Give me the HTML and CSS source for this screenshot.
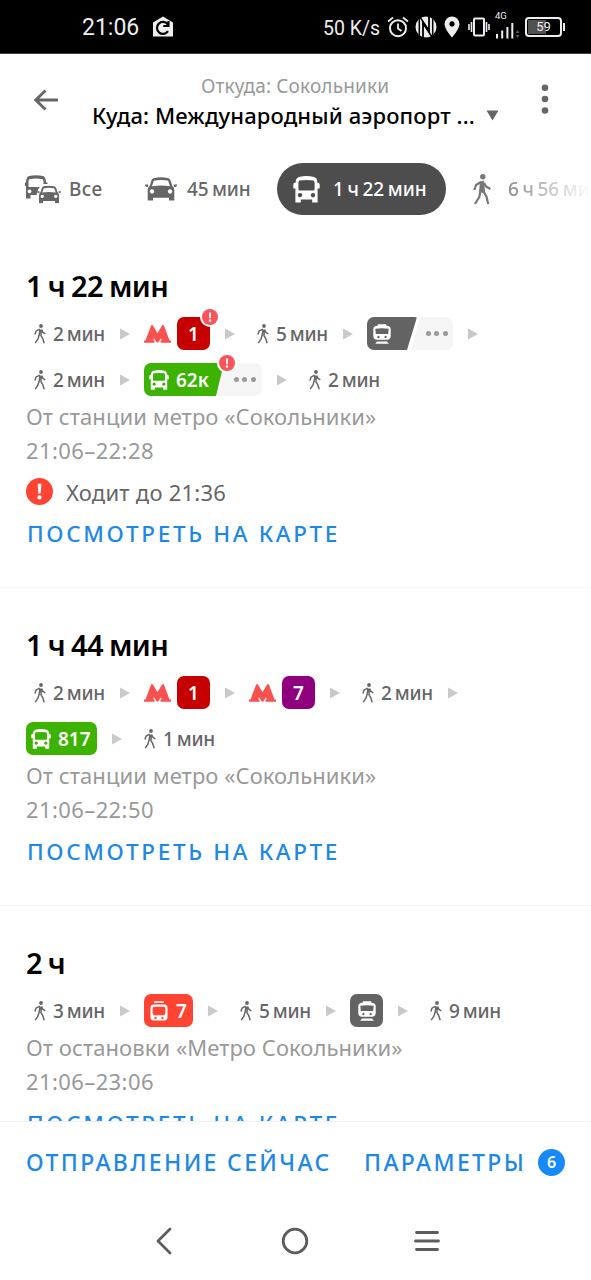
FILE: index.html
```html
<!DOCTYPE html>
<html lang="ru">
<head>
<meta charset="utf-8">
<title>Маршруты</title>
<link rel="stylesheet" href="styles.css">
</head>
<body>
<svg class="defs" width="0" height="0">
  <symbol id="walk" viewBox="0 0 12 20">
    <circle cx="7" cy="2" r="1.9" fill="currentColor"/>
    <path d="M6.1 5.4L5 12M5.8 5.2L2 7.2L.9 10.6M7.6 5.6L8.9 8.4L11.3 9.8M7.3 5.5L7 11.5M5 11.6L3.9 15.2L1.2 19.2M6.7 11.2L8.7 14.6L10.2 19.3" fill="none" stroke="currentColor" stroke-width="1.5" stroke-linejoin="round"/>
  </symbol>
  <symbol id="walk-big" viewBox="0 0 18 31">
    <circle cx="9.8" cy="2.8" r="2.7" fill="currentColor"/>
    <path d="M7 7.5L11 6.8L12 17L10 19L6 17.5Z" fill="currentColor"/>
    <path d="M8 8L3 11L1.3 16M11.2 9L13 12.5L17.4 15M7.5 17L6.3 23L2 30M10.3 17L13.4 22.5L15.2 30" fill="none" stroke="currentColor" stroke-width="2.2" stroke-linejoin="round"/>
  </symbol>
  <symbol id="bus" viewBox="0 0 27 27">
    <path fill="currentColor" fill-rule="evenodd" d="M6 1Q13.500 -.8 21 1Q24 2 24.200 5V6.500Q26.700 6.500 26.700 8.500V12.500H24.600V26.500H19.200V23.500H7.800V26.500H2.400V12.500H.3V8.500Q.3 6.500 2.800 6.500V5Q3 2 6 1ZM6.500 4.500Q5.400 5 5.400 7V13Q5.400 14.500 7 14.500H20Q21.600 14.500 21.600 13V7Q21.600 5 20.500 4.500Q13.500 3.300 6.500 4.500ZM7 17A2.200 2.200 0 1 0 7.010 17ZM20 17A2.200 2.200 0 1 0 20.010 17Z"/>
  </symbol>
  <symbol id="car" viewBox="0 0 32 24">
    <path fill="currentColor" fill-rule="evenodd" d="M9 1Q16 -.4 23 1Q25 1.500 25.800 4L27.200 8.800Q29.300 10.500 29.300 13V23.500H24V20.800H8V23.500H2.700V13Q2.700 10.500 4.800 8.800L6.200 4Q7 1.500 9 1ZM9.500 3.600Q8.700 3.900 8.300 5.200L7 9.300Q16 7.800 25 9.300L23.700 5.200Q23.300 3.900 22.500 3.600Q16 2.500 9.500 3.600ZM7 12.300A2.200 2.200 0 1 0 7.010 12.300ZM25 12.300A2.200 2.200 0 1 0 25.010 12.300Z"/>
    <path fill="currentColor" d="M0 7.500H3.200V10H1.500Q0 9.500 0 7.500ZM32 7.500H28.800V10H30.500Q32 9.500 32 7.500Z"/>
  </symbol>
  <symbol id="train" viewBox="0 0 18 20">
    <path fill="currentColor" fill-rule="evenodd" d="M5 .3H13L13.500 1.800Q17.700 2 17.700 5V12Q17.700 15.700 14 15.700H4Q.3 15.700 .3 12V5Q.3 2 4.500 1.800ZM2.300 4.800L2.800 10H15.200L15.700 4.800Q9 3.800 2.300 4.800ZM5.400 11.800A1.200 1.200 0 1 0 5.410 11.800ZM12.600 11.800A1.200 1.200 0 1 0 12.610 11.800Z"/>
    <path fill="currentColor" d="M4 17.500H14L15.800 19.700H2.200Z"/>
  </symbol>
  <symbol id="tram" viewBox="0 0 18 20">
    <path d="M4 1H14" stroke="currentColor" stroke-width="1.500"/>
    <path fill="currentColor" fill-rule="evenodd" d="M4 3.600H14Q17.500 3.600 17.500 7V16Q17.500 19.500 14 19.500H4Q.5 19.500 .5 16V7Q.5 3.600 4 3.600ZM4.500 5.800Q2.600 5.800 2.600 8V12L3.600 14.300H14.400L15.400 12V8Q15.400 5.800 13.500 5.800ZM5.500 15.800A1.200 1.200 0 1 0 5.510 15.800ZM12.500 15.800A1.200 1.200 0 1 0 12.510 15.800Z"/>
  </symbol>
  <symbol id="metro" viewBox="0 0 27 18">
    <path fill="#f9514f" d="M0 17.700V15.500H1.500L7.200 .3H8.800L13.500 8.200L18.200 .3H19.800L25.500 15.500H27V17.700H16.500V15.500H17.700L17 13.200L14.200 17.500H12.800L10 13.200L9.300 15.500H10.500V17.700Z"/>
  </symbol>
  <symbol id="alert" viewBox="0 0 26 26">
    <circle cx="13" cy="13" r="13" fill="currentColor"/>
    <path d="M11.200 5.500H14.800L14.200 15H11.800Z" fill="#fff"/><circle cx="13" cy="18.700" r="2" fill="#fff"/>
  </symbol>
  <symbol id="arrow" viewBox="0 0 10 12"><path d="M0 .5L10 6L0 11.500Z" fill="#c9c9c9"/></symbol>
</svg>

<div class="status">
  <span class="clock">21:06</span>
  <svg class="house" width="22" height="22" viewBox="0 0 22 22"><path d="M1 6.500L11 .5L21 6.500V20.500H1Z" fill="#eee"/><path d="M16 15.200A6 6 0 1 1 15.700 8.200M16.500 5V10H11.300" fill="none" stroke="#000" stroke-width="2.200"/></svg>
  <span class="speed">50 K/s</span>
  <svg width="22" height="22" viewBox="0 0 22 22" class="s-alarm"><circle cx="11" cy="12.200" r="8" fill="none" stroke="#eee" stroke-width="2"/><path d="M11 7.500V12.500L14.500 15M1 5.500L6 1.500M21 5.500L16 1.500" fill="none" stroke="#eee" stroke-width="1.800"/></svg>
  <svg width="22" height="22" viewBox="0 0 22 22" class="s-nfc"><circle cx="11" cy="11" r="10.500" fill="#eee"/><path d="M4.300 3V19M17.700 3V19" stroke="#000" stroke-width="1.500"/><path d="M8 22V7L14 15V0" fill="none" stroke="#000" stroke-width="1.800"/><path d="M5 1L14.500 15.500M7.500 6.500L17 21" stroke="#000" stroke-width="1.500"/></svg>
  <svg width="16" height="22" viewBox="0 0 16 22" class="s-pin"><path fill="#eee" fill-rule="evenodd" d="M8 .5A7.500 7.500 0 0 0 .5 8C.5 13 8 21.500 8 21.500S15.500 13 15.500 8A7.500 7.500 0 0 0 8 .5ZM8 5.300A2.700 2.700 0 1 1 7.990 5.300Z"/></svg>
  <svg width="22" height="20" viewBox="0 0 22 20" class="s-vib"><rect x="6" y="1.500" width="10" height="17" rx="1" fill="none" stroke="#eee" stroke-width="2"/><path d="M1 7V13M3.500 5V15M21 7V13M18.500 5V15" stroke="#eee" stroke-width="1.600"/></svg>
  <div class="signal">
    <span class="net">4G</span>
    <svg width="26" height="18" viewBox="0 0 26 18"><path d="M2 17.500V13M7.200 17.500V9.500M12.400 17.500V6M17.300 17.500V2" stroke="#eee" stroke-width="2"/><path d="M20.500 12L22.500 9L24.500 12ZM20.500 14L22.500 17L24.500 14Z" fill="#555"/></svg>
  </div>
  <div class="battery"><span class="level"></span><span class="pct">59</span></div><span class="tip"></span>
</div>

<header class="header">
  <svg width="24" height="22" viewBox="0 0 24 22" class="back"><path d="M11.500 1.500L1.800 11L11.500 20.500M2 11H24" fill="none" stroke="#666" stroke-width="2.800"/></svg>
  <div class="dest">
    <div class="from"><span>Откуда: Сокольники</span></div>
    <div class="to"><span class="to-text">Куда: Международный аэропорт ...</span><svg width="13" height="11" viewBox="0 0 13 11"><path d="M.5 .5H12.500L6.500 10.500Z" fill="#666"/></svg></div>
  </div>
  <svg width="8" height="30" viewBox="0 0 8 30" class="more"><circle cx="4" cy="3.800" r="3.300" fill="#666"/><circle cx="4" cy="15" r="3.300" fill="#666"/><circle cx="4" cy="26.500" r="3.300" fill="#666"/></svg>
</header>

<nav class="tabs">
  <div class="tab tab-all">
    <svg width="36" height="29" viewBox="0 0 36 29"><path fill="currentColor" fill-rule="evenodd" d="M4 1Q11 -.7 18 1Q21 2 21 7.500H22.500V9H18.500V6Q18.500 4.400 17 4Q11 3 5 4Q3.500 4.400 3.500 6V12H15Q13 13.500 12.300 17L11.500 20H5.500V23.500H1V11H0V7.500H1Q1 2 4 1ZM4.500 14.500A1.900 1.900 0 1 0 4.510 14.500Z"/><svg x="12" y="10.500" width="24" height="18" viewBox="0 0 32 24"><use href="#car"/></svg></svg>
    <span>Все</span>
  </div>
  <div class="tab tab-car"><svg width="32" height="24"><use href="#car"/></svg><span>45 мин</span></div>
  <div class="tab tab-bus"><svg width="27" height="27"><use href="#bus"/></svg><span>1 ч 22 мин</span></div>
  <div class="tab tab-walk"><svg width="18" height="31"><use href="#walk-big"/></svg><span>6 ч 56 мин</span></div>
</nav>

<main class="list">
  <section class="card">
    <h2 class="title">1 ч 22 мин</h2>
    <div class="rows">
      <div class="row">
        <div class="walk"><svg width="12" height="20"><use href="#walk"/></svg><span>2 мин</span></div>
        <svg class="arrow"><use href="#arrow"/></svg>
        <div class="metro"><svg width="27" height="18"><use href="#metro"/></svg><span class="badge line red">1<svg class="warn" viewBox="0 0 20 20"><circle cx="10" cy="10" r="10" fill="#fff"/><use href="#alert" x="2" y="2" width="16" height="16"/></svg></span></div>
        <svg class="arrow"><use href="#arrow"/></svg>
        <div class="walk"><svg width="12" height="20"><use href="#walk"/></svg><span>5 мин</span></div>
        <svg class="arrow"><use href="#arrow"/></svg>
        <div class="group group-train"><span class="cut gray"><svg width="18" height="20"><use href="#train"/></svg></span><span class="etc"><i></i><i></i><i></i></span></div>
        <svg class="arrow"><use href="#arrow"/></svg>
      </div>
      <div class="row">
        <div class="walk"><svg width="12" height="20"><use href="#walk"/></svg><span>2 мин</span></div>
        <svg class="arrow"><use href="#arrow"/></svg>
        <div class="group group-bus"><span class="cut green"><svg width="20" height="20"><use href="#bus"/></svg>62к</span><span class="etc"><i></i><i></i><i></i></span><svg class="warn" viewBox="0 0 20 20"><circle cx="10" cy="10" r="10" fill="#fff"/><use href="#alert" x="2" y="2" width="16" height="16"/></svg></div>
        <svg class="arrow"><use href="#arrow"/></svg>
        <div class="walk"><svg width="12" height="20"><use href="#walk"/></svg><span>2 мин</span></div>
      </div>
    </div>
    <p class="desc stop">От станции метро «Сокольники»</p>
    <p class="desc time">21:06–22:28</p>
    <div class="notice"><svg width="27" height="27"><use href="#alert"/></svg><span>Ходит до 21:36</span></div>
    <a class="link">ПОСМОТРЕТЬ НА КАРТЕ</a>
  </section>

  <section class="card">
    <h2 class="title">1 ч 44 мин</h2>
    <div class="rows">
      <div class="row">
        <div class="walk"><svg width="12" height="20"><use href="#walk"/></svg><span>2 мин</span></div>
        <svg class="arrow"><use href="#arrow"/></svg>
        <div class="metro"><svg width="27" height="18"><use href="#metro"/></svg><span class="badge line red">1</span></div>
        <svg class="arrow"><use href="#arrow"/></svg>
        <div class="metro"><svg width="27" height="18"><use href="#metro"/></svg><span class="badge line purple">7</span></div>
        <svg class="arrow"><use href="#arrow"/></svg>
        <div class="walk"><svg width="12" height="20"><use href="#walk"/></svg><span>2 мин</span></div>
        <svg class="arrow"><use href="#arrow"/></svg>
      </div>
      <div class="row">
        <span class="badge bus-badge green"><svg width="20" height="20"><use href="#bus"/></svg>817</span>
        <svg class="arrow"><use href="#arrow"/></svg>
        <div class="walk"><svg width="12" height="20"><use href="#walk"/></svg><span>1 мин</span></div>
      </div>
    </div>
    <p class="desc stop">От станции метро «Сокольники»</p>
    <p class="desc time">21:06–22:50</p>
    <a class="link">ПОСМОТРЕТЬ НА КАРТЕ</a>
  </section>

  <section class="card">
    <h2 class="title">2 ч</h2>
    <div class="rows">
      <div class="row">
        <div class="walk"><svg width="12" height="20"><use href="#walk"/></svg><span>3 мин</span></div>
        <svg class="arrow"><use href="#arrow"/></svg>
        <span class="badge tram-badge"><svg width="18" height="20"><use href="#tram"/></svg>7</span>
        <svg class="arrow"><use href="#arrow"/></svg>
        <div class="walk"><svg width="12" height="20"><use href="#walk"/></svg><span>5 мин</span></div>
        <svg class="arrow"><use href="#arrow"/></svg>
        <span class="badge line gray"><svg width="18" height="20"><use href="#train"/></svg></span>
        <svg class="arrow"><use href="#arrow"/></svg>
        <div class="walk"><svg width="12" height="20"><use href="#walk"/></svg><span>9 мин</span></div>
      </div>
    </div>
    <p class="desc stop">От остановки «Метро Сокольники»</p>
    <p class="desc time">21:06–23:06</p>
    <a class="link">ПОСМОТРЕТЬ НА КАРТЕ</a>
  </section>
</main>

<footer class="footer">
  <a class="depart">ОТПРАВЛЕНИЕ СЕЙЧАС</a>
  <a class="params">ПАРАМЕТРЫ</a>
  <span class="count">6</span>
</footer>

<div class="sysnav">
  <svg width="16" height="28" viewBox="0 0 16 28"><path d="M14 2L2 14L14 26" fill="none" stroke="#5c5c5c" stroke-width="2.800" stroke-linecap="round" stroke-linejoin="round"/></svg>
  <svg width="28" height="28" viewBox="0 0 28 28"><circle cx="14" cy="14" r="11.800" fill="none" stroke="#5c5c5c" stroke-width="2.800"/></svg>
  <svg width="26" height="22" viewBox="0 0 26 22"><path d="M2.500 2.500H23.500M1.500 11H24.500M2.500 19.500H23.500" stroke="#5c5c5c" stroke-width="2.800" stroke-linecap="round"/></svg>
</div>
</body>
</html>
```
FILE: styles.css
```css
* { box-sizing: border-box; }
body {
  margin: 0;
  width: 591px;
  height: 1280px;
  overflow: hidden;
  display: flex;
  flex-direction: column;
  background: #fff;
  font-family: "Noto Sans", sans-serif;
  color: #666;
}
svg { display: block; flex: none; }
span, p, h2, a { white-space: nowrap; }
.defs { position: absolute; }

/* system status bar */
.status {
  flex: none;
  height: 54px;
  background: #000;
  color: #eee;
  font-family: Roboto, sans-serif;
  display: flex;
  align-items: center;
  padding-left: 82px;
  border-bottom: 1px solid #444;
}
.clock { width: 70px; padding-top: 2px; font-size: 23px; }
.speed { width: 64px; margin: 4px 0 0 149px; font-size: 19.5px; }
.s-alarm { margin-left: 0; }
.s-nfc { margin-left: 6px; }
.s-pin { margin-left: 7px; }
.s-vib { margin-left: 8px; }
.signal { width: 26px; height: 28px; margin: -4px 0 0 5px; display: flex; flex-direction: column; }
.net { height: 10px; font-size: 9.5px; line-height: 10px; }
.battery {
  position: relative;
  width: 37px;
  height: 20px;
  margin-left: 4px;
  border: 2px solid #eee;
  border-radius: 4px;
  display: flex;
  align-items: center;
  justify-content: center;
}
.level { position: absolute; left: 1px; top: 1px; bottom: 1px; width: 18px; background: #505050; }
.pct { position: relative; font-size: 13px; }
.tip { width: 2px; height: 8px; margin-left: 1px; background: #eee; }

/* route header */
.header { flex: none; height: 90px; display: flex; padding-left: 34px; }
.back { margin-top: 35px; }
.dest { width: 442px; margin-left: 34px; padding-top: 18px; }
.from { height: 29px; line-height: 29px; font-size: 19px; color: #999; text-align: center; padding-right: 36px; letter-spacing: .15px; }
.to { height: 28px; display: flex; align-items: center; }
.to-text { width: 394px; font-size: 22px; font-weight: 500; color: #000; letter-spacing: .13px; }
.more { margin-left: 7px; margin-top: 30px; }

/* transport tabs */
.tabs {
  flex: none;
  height: 84px;
  display: flex;
  align-items: center;
  padding: 0 0 0 25px;
  margin-top: 3px;
  overflow: hidden;
  font-size: 19px;
  font-weight: 500;
  word-spacing: -1.400px;
}
.tab { flex: none; display: flex; align-items: center; }
.tab-all { width: 120px; gap: 8px; letter-spacing: .4px; }
.tab-car { width: 132px; gap: 10px; letter-spacing: -.1px; }
.tab-bus { width: 169px; height: 52px; padding-left: 16px; gap: 13px; border-radius: 26px; background: #4d4d4d; color: #fff; }
.tab-walk {
  width: 145px;
  padding-left: 27px;
  gap: 17px;
  color: #777;
  overflow: hidden;
  -webkit-mask-image: linear-gradient(to right, #000 45px, transparent 146px);
  mask-image: linear-gradient(to right, #000 45px, transparent 146px);
}

/* route list */
.list { flex: none; height: 893px; margin-top: -3px; overflow: hidden; }
.card { height: 318px; padding: 37px 26px 0; border-top: 1px solid #f4f4f4; }
.card:first-child { height: 359px; border-top-color: transparent; }
.title {
  margin: 0 0 11px;
  height: 40px;
  line-height: 40px;
  font-size: 29px;
  font-weight: 600;
  color: #000;
  letter-spacing: -.55px;
  word-spacing: -1.200px;
}
.rows { display: flex; flex-direction: column; gap: 13px; }
.row { display: flex; align-items: center; height: 33px; }
.arrow { width: 10px; height: 12px; margin: 0 14px 0 15px; }
.walk {
  width: 79px;
  padding-left: 8px;
  display: flex;
  align-items: center;
  gap: 7px;
  font-size: 19px;
  font-weight: 500;
  letter-spacing: -.3px;
  word-spacing: -1.400px;
}
.metro { display: flex; align-items: center; gap: 6px; }
.badge {
  position: relative;
  height: 33px;
  border-radius: 7px;
  display: flex;
  align-items: center;
  color: #fff;
  font-size: 19px;
  font-weight: 600;
}
.line { width: 33px; justify-content: center; }
.red { background: #c60000; }
.purple { background: #8f007f; }
.green { background: #3bb300; }
.gray { background: #636363; }
.bus-badge { width: 71px; padding-left: 5px; gap: 7px; }
.tram-badge { width: 49px; padding-left: 6px; gap: 8px; background: #ff4433; }
.warn { position: absolute; width: 20px; height: 20px; top: -10px; right: -10px; color: #f9545a; }
.group { position: relative; height: 33px; display: flex; }
.group-train { width: 86px; }
.group-bus { width: 118px; }
.cut {
  display: flex;
  align-items: center;
  gap: 7px;
  padding-left: 6px;
  color: #fff;
  font-size: 19px;
  font-weight: 600;
  border-radius: 7px 2px 2px 7px;
}
.group-train .cut { width: 50px; clip-path: polygon(0 0, 100% 0, 80% 100%, 0 100%); }
.group-bus .cut { width: 80px; padding-left: 5px; clip-path: polygon(0 0, 100% 0, 90% 100%, 0 100%); }
.group-bus .warn { right: 25px; }
.etc {
  flex: 1;
  margin-left: -6px;
  padding-left: 9px;
  display: flex;
  align-items: center;
  justify-content: center;
  gap: 3.500px;
  background: #f5f5f5;
  border-radius: 0 7px 7px 0;
  clip-path: polygon(9px 0, 100% 0, 100% 100%, 0 100%);
}
.etc i { width: 5px; height: 5px; border-radius: 50%; background: #999; }
.desc { margin: 0; height: 34px; line-height: 34px; font-size: 22px; color: #999; letter-spacing: .06px; }
.time { letter-spacing: .4px; }
.rows + .desc { margin-top: 3px; }
.notice { height: 41px; margin-top: 4px; display: flex; align-items: center; gap: 13px; font-size: 22px; color: #666; letter-spacing: .25px; }
.notice svg { color: #ff4433; }
.link { display: block; height: 42px; line-height: 43px; padding-left: 1px; font-size: 22.500px; font-weight: 500; color: #1e88e5; letter-spacing: 2.650px; }
.time + .link { margin-top: 4px; }

/* bottom actions */
.footer {
  flex: none;
  height: 81px;
  border-top: 1px solid #f1f1f1;
  padding-left: 26px;
  display: flex;
  align-items: center;
  font-size: 23px;
  font-weight: 500;
  letter-spacing: 2.350px;
  color: #1e88e5;
  background: #fff;
}
.depart { width: 338px; }
.params { width: 174px; }
.count {
  width: 27px;
  height: 27px;
  border-radius: 50%;
  background: #168af8;
  color: #fff;
  font-size: 16px;
  font-weight: 600;
  letter-spacing: 0;
  display: flex;
  align-items: center;
  justify-content: center;
}
.sysnav { flex: none; height: 77px; display: flex; align-items: center; padding-left: 156px; }
.sysnav svg:nth-child(2) { margin-left: 109px; }
.sysnav svg:nth-child(3) { margin-left: 105px; }
```
